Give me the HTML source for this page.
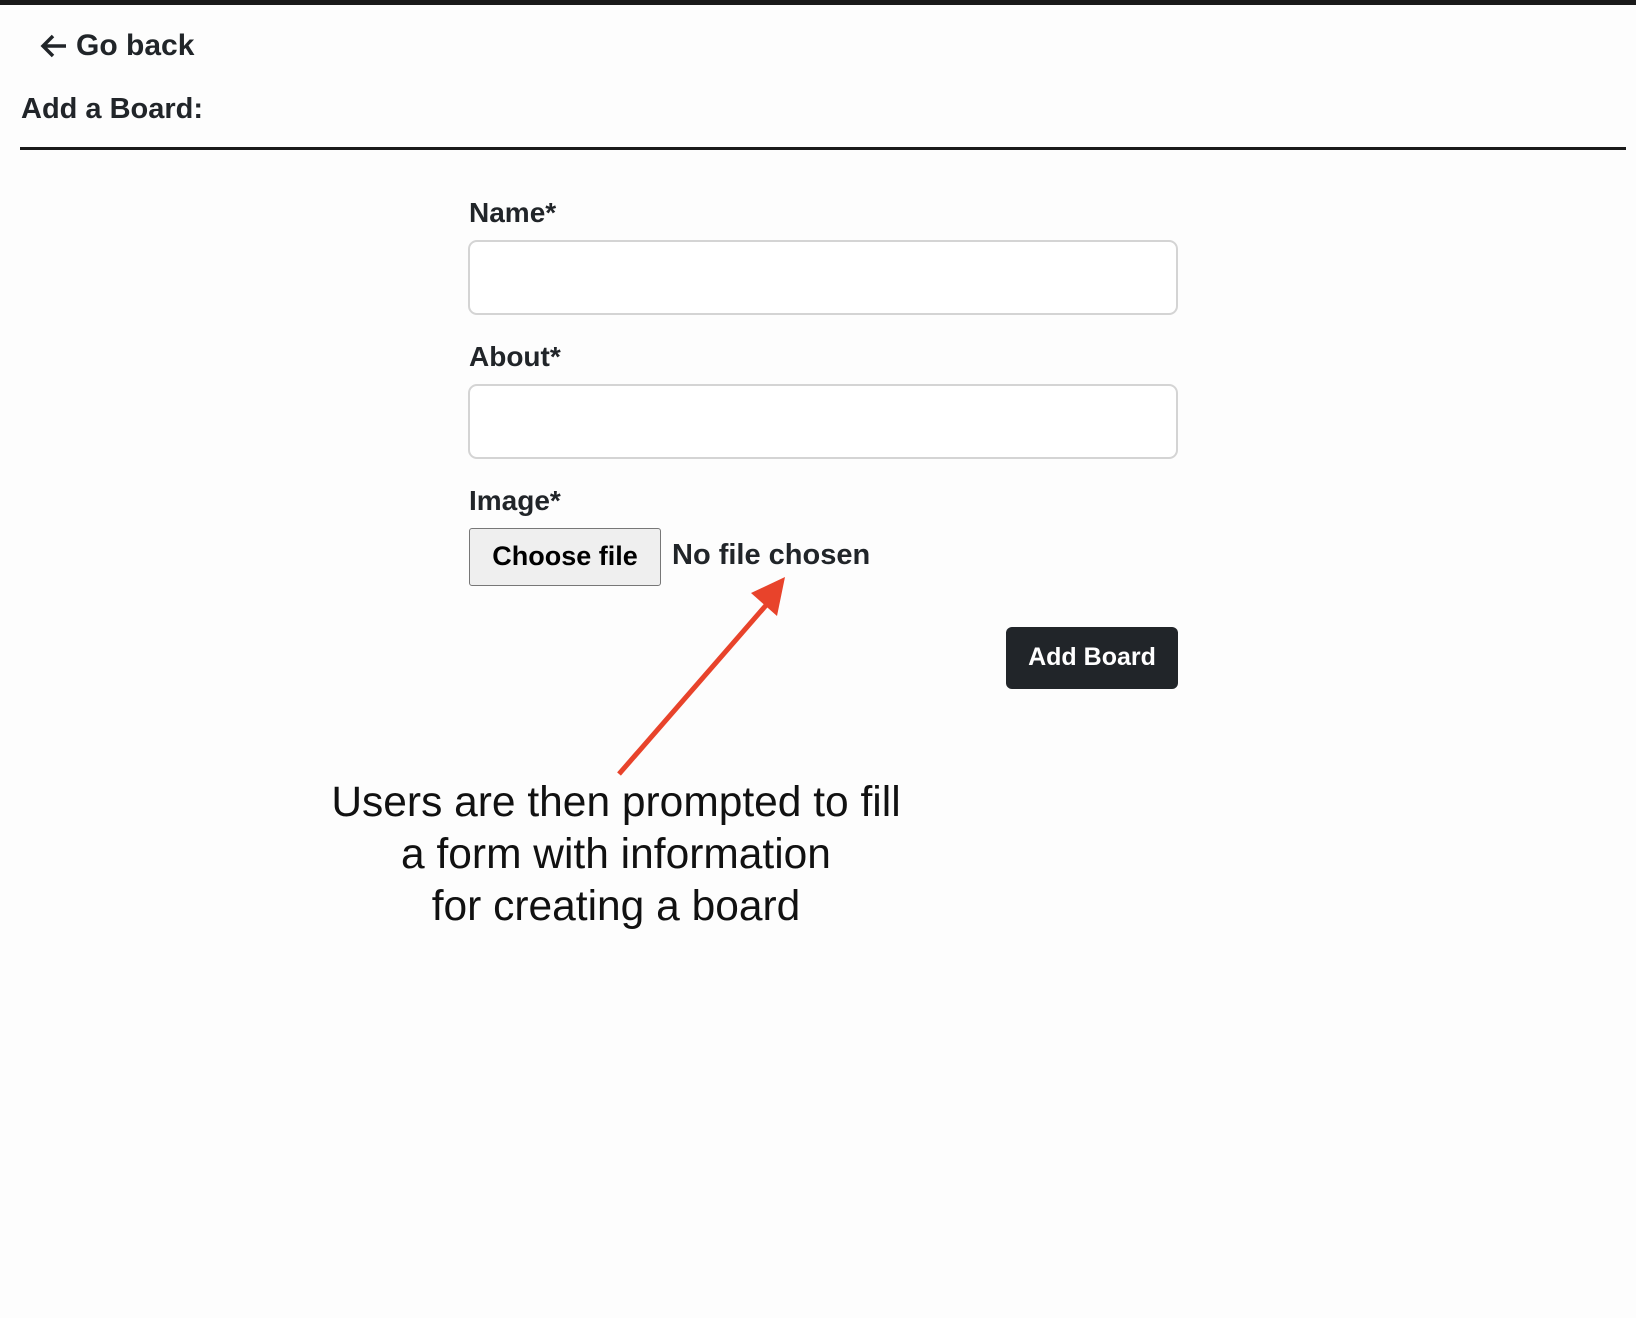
<!DOCTYPE html>
<html><head><style>
body{margin:0;width:1636px;height:1318px;background:#fdfdfd;position:relative;overflow:hidden;font-family:"Liberation Sans",sans-serif;color:#212529}
.a{position:absolute;white-space:nowrap}
.b{font-weight:bold}
.inp{position:absolute;left:468px;width:706px;height:71px;border:2px solid #d4d4d4;border-radius:9px;background:#fff}
</style></head><body>
<div class="a" style="left:0;top:0;width:1636px;height:5px;background:#1a1a1a"></div>
<svg class="a" style="left:38px;top:32px" width="32" height="28" viewBox="0 0 32 28"><path d="M28 14H5M15 4L5 14l10 10" stroke="#212529" stroke-width="3.5" fill="none"/></svg>
<div class="a b" style="left:76px;top:29px;font-size:30px">Go back</div>
<div class="a b" style="left:21px;top:93px;font-size:29px">Add a Board:</div>
<div class="a" style="left:20px;top:147px;width:1606px;height:3px;background:#1a1a1a"></div>
<div class="a b" style="left:469px;top:197px;font-size:28px">Name*</div>
<div class="inp" style="top:240px"></div>
<div class="a b" style="left:469px;top:341px;font-size:28px">About*</div>
<div class="inp" style="top:384px"></div>
<div class="a b" style="left:469px;top:485px;font-size:28px">Image*</div>
<div class="a b" style="left:469px;top:528px;width:190px;height:56px;border:1.5px solid #777;border-radius:3px;background:#efefef;font-size:27px;line-height:54px;text-align:center;color:#000">Choose file</div>
<div class="a" style="left:672px;top:539px;font-size:29px;font-weight:bold;color:#212529">No file chosen</div>
<div class="a b" style="left:1006px;top:627px;width:172px;height:62px;background:#212529;border-radius:6px;color:#fff;font-size:25px;line-height:60px;text-align:center">Add Board</div>
<svg class="a" style="left:0;top:0" width="1636" height="1318"><line x1="619" y1="774" x2="768" y2="603" stroke="#e8432b" stroke-width="5"/><polygon points="785,577 777,616 751,593" fill="#e8432b"/></svg>
<div class="a" style="left:266px;top:777px;width:700px;text-align:center;font-size:42.5px;line-height:52px;color:#111">Users are then prompted to fill<br>a form with information<br>for creating a board</div>
</body></html>
